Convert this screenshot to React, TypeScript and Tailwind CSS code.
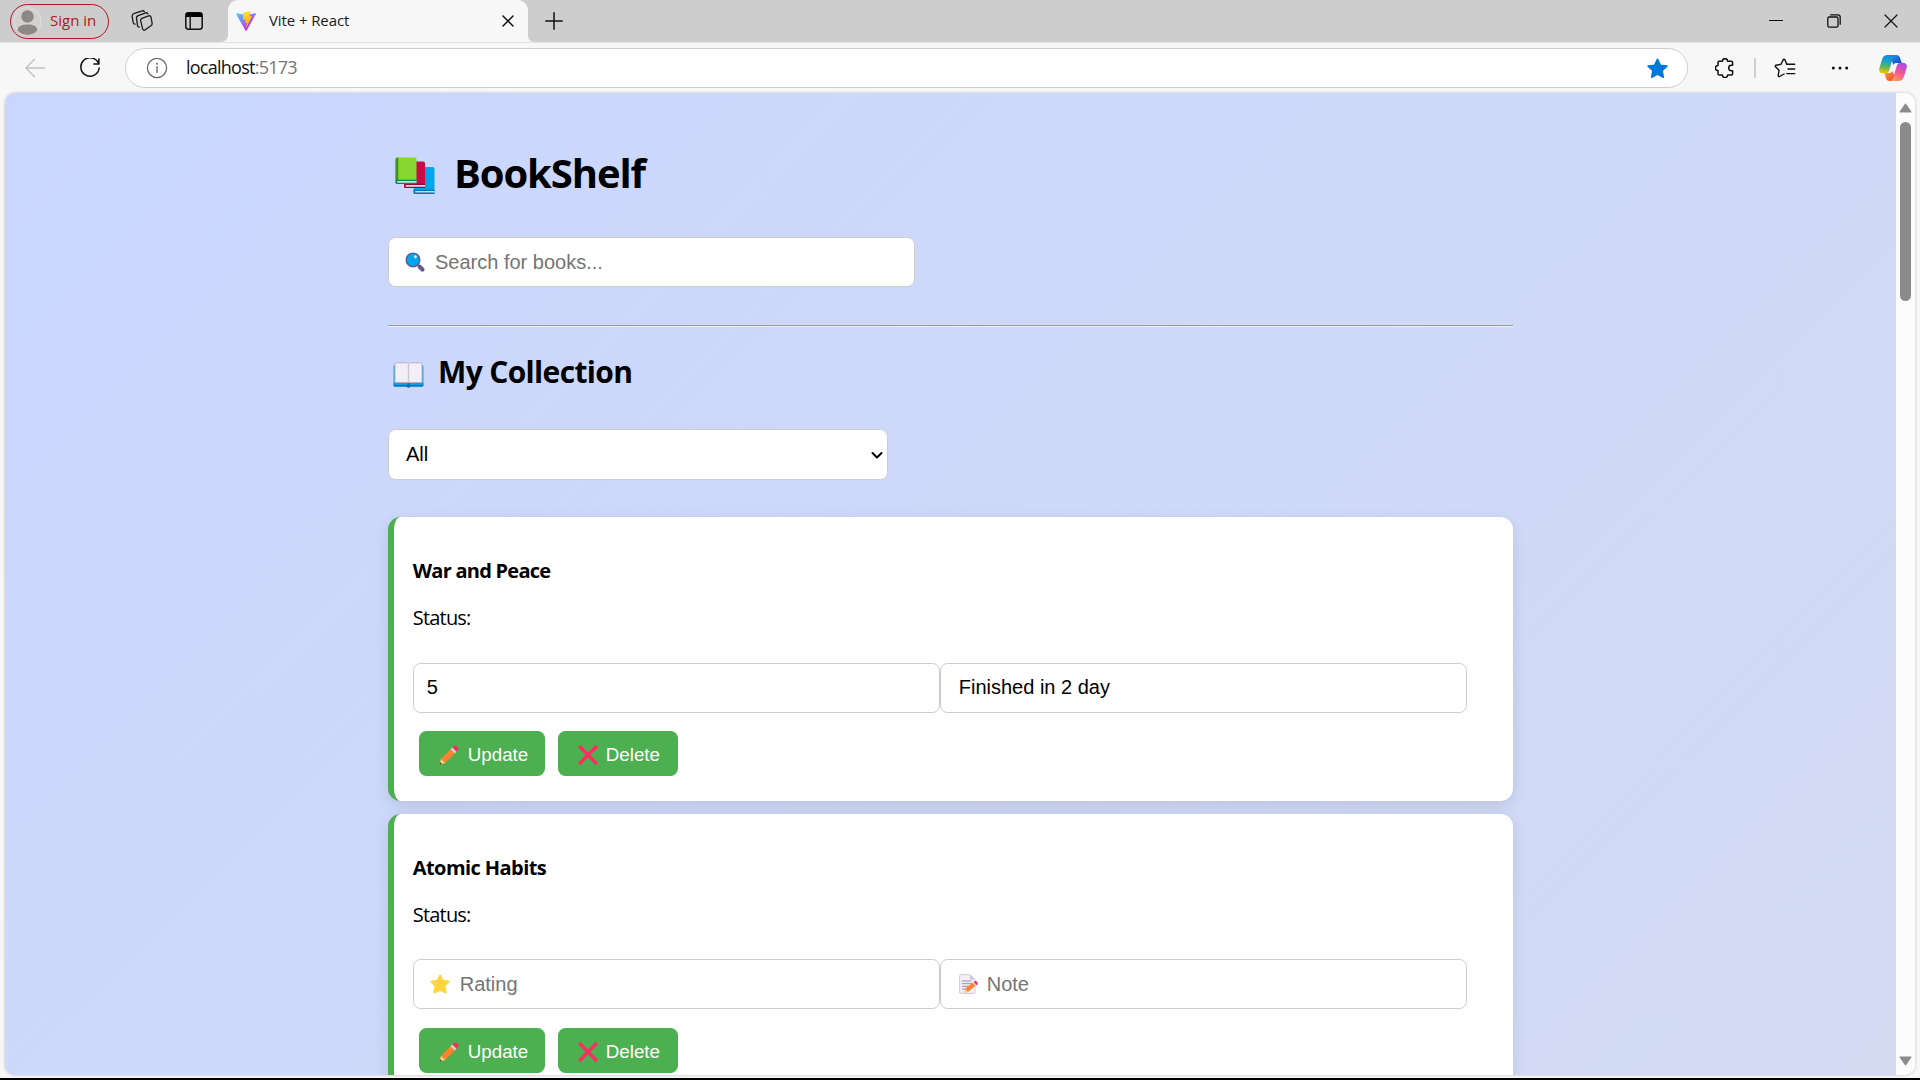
import React from "react";

type IconProps = { className?: string };

const UI = "font-['Segoe_UI','Open_Sans',sans-serif]";
const ARIAL = "font-['Liberation_Sans',Arial,sans-serif]";

function Avatar() {
  return (
    <svg className="block size-[30px] shrink-0" viewBox="0 0 30 30">
      <circle cx="16.500" cy="15" r="13.6" fill="#d3d0cd" stroke="#e3e0dd" strokeWidth="1" />
      <circle cx="16.500" cy="10.5" r="6.2" fill="#8b8886" />
      <path d="M6.500 24.5C6.800 20.6 10.500 18.6 16.500 18.6s9.7 2 10 5.9a13.6 13.6 0 0 1-20 0Z" fill="#8b8886" />
    </svg>
  );
}

function CollectionsIcon({ className }: IconProps) {
  return (
    <svg className={className} viewBox="0 0 22 22" fill="none" stroke="#1b1b1b" strokeWidth="1.3" strokeLinejoin="round" strokeLinecap="round">
      <path d="M11 8.400 17.500 5.900a1.800 1.800 0 0 1 2.500 1.200l1.100 6.100a2.600 2.600 0 0 1-1.200 2.600l-5.600 4a1.700 1.700 0 0 1-2.700-1L9.700 10.900A2.200 2.200 0 0 1 11 8.400Z" />
      <path d="M16.800 3.800a1.700 1.700 0 0 0-2.200-.9L7.300 5.600A2.800 2.800 0 0 0 5.500 8.700l1.100 7.100c.2.900.8 1.400 1.800 1.300" />
      <path d="M13.300 1.600a1.700 1.700 0 0 0-2.100-.7L3.300 3.400A3.200 3.200 0 0 0 1.200 6.900l1 5.700c.2 1 .8 1.600 1.900 1.500" />
    </svg>
  );
}

function TabActionsIcon({ className }: IconProps) {
  return (
    <svg className={className} viewBox="0 0 18 18" fill="none">
      <rect x="0.8" y="0.8" width="16.4" height="16.4" rx="2.6" stroke="#111" strokeWidth="1.5" />
      <path d="M.8 5V3.200A2.500 2.500 0 0 1 3.300.8h11.400a2.500 2.500 0 0 1 2.500 2.400V5Z" fill="#000" />
      <path d="M5.200 5v12" stroke="#111" strokeWidth="1.400" />
    </svg>
  );
}

function ViteIcon({ className }: IconProps) {
  return (
    <svg className={className} viewBox="0 0 256 257">
      <defs>
        <linearGradient id="viteA" x1="-.828%" x2="57.636%" y1="7.652%" y2="78.411%">
          <stop offset="0%" stopColor="#41D1FF" />
          <stop offset="100%" stopColor="#BD34FE" />
        </linearGradient>
        <linearGradient id="viteB" x1="43.376%" x2="50.316%" y1="2.242%" y2="89.03%">
          <stop offset="0%" stopColor="#FFEA83" />
          <stop offset="8.333%" stopColor="#FFDD35" />
          <stop offset="100%" stopColor="#FFA800" />
        </linearGradient>
      </defs>
      <path fill="url(#viteA)" d="M255.153 37.938L134.897 252.976c-2.483 4.44-8.862 4.466-11.382.048L.875 37.958c-2.746-4.814 1.371-10.646 6.827-9.67l120.385 21.517a6.537 6.537 0 0 0 2.322-.004l117.867-21.483c5.438-.991 9.574 4.796 6.877 9.62Z" />
      <path fill="url(#viteB)" d="M185.432.063L96.44 17.501a3.268 3.268 0 0 0-2.634 3.014l-5.474 92.456a3.268 3.268 0 0 0 3.997 3.378l24.777-5.718c2.318-.535 4.413 1.507 3.936 3.838l-7.361 36.047c-.495 2.426 1.782 4.5 4.151 3.78l15.304-4.649c2.372-.72 4.652 1.36 4.15 3.788l-11.698 56.621c-.732 3.542 3.979 5.473 5.943 2.437l1.313-2.028l72.516-144.720c1.215-2.423-.88-5.186-3.540-4.672l-25.505 4.922c-2.396.462-4.435-1.770-3.759-4.114l16.646-57.705c.677-2.350-1.370-4.583-3.769-4.113Z" />
    </svg>
  );
}

function Stroke({ className, d, w = 1.4, color = "#111", box = "0 0 20 20" }: { className?: string; d: string; w?: number; color?: string; box?: string }) {
  return (
    <svg className={className} viewBox={box} fill="none" stroke={color} strokeWidth={w} strokeLinecap="round" strokeLinejoin="round">
      <path d={d} />
    </svg>
  );
}

function InfoIcon({ className }: IconProps) {
  return (
    <svg className={className} viewBox="0 0 22 22" fill="none">
      <circle cx="11" cy="11" r="9.600" stroke="#6b6b6b" strokeWidth="1.300" />
      <path d="M11 9.800v5.700" stroke="#6b6b6b" strokeWidth="1.400" strokeLinecap="round" />
      <circle cx="11" cy="6.800" r="1" fill="#6b6b6b" />
    </svg>
  );
}

function StarFilled({ className }: IconProps) {
  return (
    <svg className={className} viewBox="0 0 20 20">
      <path
        d="M10 1.200 12.700 6.900 18.900 7.700 14.300 12 15.500 18.300 10 15.300 4.500 18.300 5.700 12 1.100 7.700 7.300 6.900Z"
        fill="#0078d7"
        stroke="#0078d7"
        strokeWidth="1.600"
        strokeLinejoin="round"
      />
    </svg>
  );
}

function FavoritesIcon({ className }: IconProps) {
  return (
    <svg className={className} viewBox="0 0 22 20" fill="none" stroke="#111" strokeWidth="1.400" strokeLinecap="round" strokeLinejoin="round">
      <path d="M13.700 6.400 12.800 6.300 10.900 1.900a.9.900 0 0 0-1.700 0L7 6.300l-5 .9a.9.900 0 0 0-.5 1.500L5 12.300l-.8 5.300a.9.900 0 0 0 1.300.9l4.600-2.500" />
      <path d="M12.800 6.300h7.900M14 11h6.700M12.800 15.600h7.900" />
    </svg>
  );
}

function CopilotIcon({ className }: IconProps) {
  return (
    <svg className={className} viewBox="0 0 28 26">
      <defs>
        <linearGradient id="cpL" x1="0.500" y1="0" x2="0.350" y2="1">
          <stop offset="0" stopColor="#0a8fe8" />
          <stop offset="0.350" stopColor="#1c9fc8" />
          <stop offset="0.650" stopColor="#5bb85a" />
          <stop offset="1" stopColor="#f6c400" />
        </linearGradient>
        <linearGradient id="cpR" x1="0.700" y1="0" x2="0.300" y2="1">
          <stop offset="0" stopColor="#a64af0" />
          <stop offset="0.500" stopColor="#f0569a" />
          <stop offset="1" stopColor="#ff9a5a" />
        </linearGradient>
        <linearGradient id="cpT" x1="0" y1="0" x2="1" y2="1">
          <stop offset="0" stopColor="#2aa6f0" />
          <stop offset="1" stopColor="#1238c8" />
        </linearGradient>
        <linearGradient id="cpB" x1="0" y1="0" x2="1" y2="1">
          <stop offset="0" stopColor="#ffa51e" />
          <stop offset="1" stopColor="#e8344e" />
        </linearGradient>
      </defs>
      <path d="M9 0h8.500c2 0 3 1.200 3.600 3l1.500 5h-4.600c-2 0-3 .6-3.600 2L12 4Z" fill="url(#cpT)" />
      <path d="M19 26h-8.500c-2 0-3-1.200-3.600-3l-1.500-5h4.500c2 0 2.800-.4 3.300-2l3.200 6Z" fill="url(#cpB)" />
      <path d="M8.500 0h8.300c-1.800.6-2.600 2-3.200 4l-3.300 11c-.6 2-1.800 3.300-4 3.300H4.200C1 18.300-.5 16 .4 13L3.200 4C4 1.500 5.800 0 8.500 0Z" fill="url(#cpL)" />
      <path d="M19.500 26h-8.300c1.800-.6 2.600-2 3.200-4l3.300-11c.6-2 1.800-3.300 4-3.300h2.100c3.200 0 4.700 2.300 3.800 5.300L24.800 22c-.8 2.500-2.600 4-5.300 4Z" fill="url(#cpR)" />
    </svg>
  );
}

function BooksEmoji({ className }: IconProps) {
  return (
    <svg className={className} viewBox="0 0 40 38">
      <path d="M18.500 12a2 2 0 0 1 2-2H37.500a2 2 0 0 1 2 2V35.500H18.500Z" fill="#00a6ed" />
      <path d="M18.500 34.500c0-1 .6-1.800 1.600-1.800H39.500V37H20a1.500 1.500 0 0 1-1.500-1.500Z" fill="#0074ba" />
      <path d="M20.200 33.900H39.500v1.700H20.200Z" fill="#d9d2e0" />
      <path d="M9 6.500a2 2 0 0 1 2-2H28a2 2 0 0 1 2 2V30H9Z" fill="#ca0b4a" />
      <path d="M9 28.500c0-1 .6-1.700 1.600-1.700H30V31H10.500A1.500 1.500 0 0 1 9 29.500Z" fill="#990838" />
      <path d="M10.700 28H30v1.800H10.700Z" fill="#e6dce6" />
      <path d="M.5 2.500a2 2 0 0 1 2-2H19.500a2 2 0 0 1 2 2V25.500H.5Z" fill="#86d72f" />
      <path d="M.5 2.500a2 2 0 0 1 2-2h.8V24H.5Z" fill="#44911b" />
      <path d="M.5 24.500c0-1 .6-1.700 1.600-1.700H21.500V27H2a1.500 1.500 0 0 1-1.500-1.500Z" fill="#008463" />
      <path d="M2.200 24H21.500v1.800H2.200Z" fill="#d3dde0" />
    </svg>
  );
}

function OpenBookEmoji({ className }: IconProps) {
  return (
    <svg className={className} viewBox="0 0 31 26">
      <path d="M2 3h27a1.500 1.500 0 0 1 1.500 1.500V22.500A1.700 1.700 0 0 1 29 24H2A1.700 1.700 0 0 1 .5 22.500V4.500A1.500 1.500 0 0 1 2 3Z" fill="#26a9e0" />
      <path d="M.5 22.500H30.500v.8c0 .8-.6 1.500-1.500 1.500H17.500a2.500 2.500 0 0 1-4 0H2a1.500 1.500 0 0 1-1.500-1.500Z" fill="#0074ba" />
      <path d="M.5 20.500H30.500v2.300H.5Z" fill="#00a6ed" />
      <path d="M3.500.8H13.800a2 2 0 0 1 1.700.8 2 2 0 0 1 1.700-.8H27.500A1.500 1.500 0 0 1 29 2.300V20.500H2V2.300A1.500 1.500 0 0 1 3.500.8Z" fill="#f3eef8" stroke="#b4acbc" strokeWidth=".9" />
      <path d="M15.500 1.600V21" stroke="#cdc4d6" strokeWidth="1.300" />
      <path d="M14 21h3v2.500a1.500 1.500 0 0 1-3 0Z" fill="#0074ba" />
    </svg>
  );
}

function SearchEmoji({ className }: IconProps) {
  return (
    <svg className={className} viewBox="0 0 20 20">
      <path d="m12 12 2.800 2.800" stroke="#533566" strokeWidth="1.600" />
      <path d="m14.700 14.700 2.700 2.700" stroke="#635994" strokeWidth="4.200" strokeLinecap="round" />
      <circle cx="8" cy="7.900" r="6.800" fill="#00a6ed" stroke="#635994" strokeWidth="1.400" />
      <ellipse cx="10.400" cy="4.800" rx="1.200" ry="1.600" transform="rotate(-35 10.400 4.800)" fill="#fff" />
    </svg>
  );
}

function PencilEmoji({ className }: IconProps) {
  return (
    <svg className={className} viewBox="0 0 20 20">
      <path d="M.5 19.500 2 13.700 6.300 18Z" fill="#ffce7c" />
      <path d="M.5 19.500 1.100 17.200 2.800 18.900Z" fill="#402a32" />
      <path d="M2 13.700 11.500 4.200 15.800 8.500 6.300 18Z" fill="#ff822d" />
      <path d="M11.500 4.200 13.500 2.200 17.800 6.500 15.800 8.500Z" fill="#d3d3d3" />
      <path d="m13.300 2.400 1.200-1.200c.9-.9 2.400-.9 3.300 0l1 1c.9.900.9 2.400 0 3.300l-1.200 1.200Z" fill="#f92f60" />
    </svg>
  );
}

function CrossEmoji({ className }: IconProps) {
  return (
    <svg className={className} viewBox="0 0 20 20">
      <path d="M2.100 2.100 17.900 17.900M17.900 2.100 2.100 17.900" stroke="#f92f60" strokeWidth="3.500" strokeLinecap="round" />
    </svg>
  );
}

function StarEmoji({ className }: IconProps) {
  return (
    <svg className={className} viewBox="0 0 20 20">
      <path
        d="M10 2 12.300 7.100 18.200 7.700 14 11.900 15.400 18 10 15.600 4.600 18 6 11.900 1.800 7.700 7.700 7.100Z"
        fill="#fcd53f"
        stroke="#fcd53f"
        strokeWidth="2.600"
        strokeLinejoin="round"
      />
    </svg>
  );
}

function MemoEmoji({ className }: IconProps) {
  return (
    <svg className={className} viewBox="0 0 20 20">
      <path d="M1.800.6H11l5 5V18.200a1.200 1.200 0 0 1-1.200 1.200h-13A1.200 1.200 0 0 1 .6 18.200V1.800A1.200 1.200 0 0 1 1.800.6Z" fill="#f3eef8" stroke="#cdc4d6" strokeWidth=".9" />
      <path d="M11 .6V4.400A1.200 1.200 0 0 0 12.200 5.600H16Z" fill="#cdc4d6" />
      <path d="M3 7h9.500M3 9.700h10.500M3 12.400h8M3 15.100h4" stroke="#998ea4" strokeWidth="1" />
      <path d="M4.800 19.200 6 15 9 18Z" fill="#ffce7c" />
      <path d="M6 15 13.500 8.800 16.300 11.800 9 18Z" fill="#ff822d" />
      <path d="m13.500 8.800 1.200-1 2.800 3-1.200 1Z" fill="#d3d3d3" />
      <path d="m14.700 7.800.8-.5c1.600-.9 4.200 1.600 3 3.100l-1 .9Z" fill="#f92f60" />
    </svg>
  );
}

function TabStrip() {
  return (
    <header className="flex h-[42px] items-center bg-[#cdcdcd]">
      <div className="ml-[10px] flex h-[35px] w-[99px] items-center rounded-full border-[1.5px] border-[#b3161c]">
        <Avatar />
        <span className={`${UI} ml-[9px] pb-[2px] text-[15px] leading-5 whitespace-nowrap text-[#b3161c]`}>Sign in</span>
      </div>
      <CollectionsIcon className="ml-[22px] size-[22px]" />
      <TabActionsIcon className="ml-[32px] size-[18px]" />
      <div className="ml-[18px] flex h-full w-[7px] items-end bg-[#f7f7f7]">
        <div className="h-full w-full rounded-br-[8px] bg-[#cdcdcd]" />
      </div>
      <div className="flex h-full w-[300px] bg-[#cdcdcd]">
        <div className="flex h-full w-[300px] items-center rounded-t-[10px] bg-[#f7f7f7] pl-[8px]">
          <ViteIcon className="size-[20px]" />
          <span className={`${UI} ml-[13px] w-[233px] pb-[2px] text-[15px] leading-5 tracking-[-0.1px] whitespace-nowrap text-[#1b1b1b]`}>Vite + React</span>
          <Stroke className="size-[12px]" d="M1 1 11 11M11 1 1 11" box="0 0 12 12" w={1.5} />
        </div>
      </div>
      <div className="flex h-full w-[6px] items-end bg-[#f7f7f7]">
        <div className="h-full w-full rounded-bl-[8px] bg-[#cdcdcd]" />
      </div>
      <Stroke className="ml-[11px] size-[18px]" d="M9 .8V17.200M.8 9H17.200" box="0 0 18 18" w={1.5} />
      <div className="ml-auto flex items-center pr-[22px]">
        <Stroke className="size-[14px]" d="M.5 6.500H13.500" box="0 0 14 14" w={1.2} />
        <svg className="ml-[44px] size-[14px]" viewBox="0 0 14 14" fill="none" stroke="#111" strokeWidth="1.300">
          <rect x=".8" y="3" width="10.200" height="10.200" rx="1.400" />
          <path d="M3.200.9h7.600a2.400 2.400 0 0 1 2.400 2.400v7.500" />
        </svg>
        <Stroke className="ml-[43px] size-[14px]" d="M1 1 13 13M13 1 1 13" box="0 0 14 14" w={1.2} />
      </div>
    </header>
  );
}

function AddressBar() {
  return (
    <div className="flex h-[51px] items-center border-t border-[#e2e2e2] bg-[#f7f7f7]">
      <Stroke className="ml-[25px] size-[20px]" d="M19.500 10H1M9.500 1.200.8 10l8.700 8.800" color="#c2c2c2" />
      <Stroke className="ml-[35px] size-[20px]" d="M18.700 5.800A9.200 9.200 0 1 0 19.200 10M18.900 1v5h-5" w={1.5} />
      <div className="ml-[25px] flex h-[40px] w-[1563px] items-center rounded-full border border-[#cfcfcf] bg-white">
        <InfoIcon className="ml-[20px] size-[22px]" />
        <span className={`${UI} ml-[18px] pb-[2px] text-[18px] leading-6 tracking-[-0.75px] whitespace-nowrap text-[#111]`}>
          localhost<span className="text-[#767676]">:5173</span>
        </span>
        <StarFilled className="mr-[19px] ml-auto size-[21px]" />
      </div>
      <svg className="ml-[27px] size-[20px]" viewBox="0 0 20 20" fill="none" stroke="#111" strokeWidth="1.500" strokeLinejoin="round">
        <path d="M4.200 3.300H7.400a2.600 2.600 0 0 1 5.200 0h3.800a1.200 1.200 0 0 1 1.200 1.200V7.300h-1.200a2.700 2.700 0 0 0 0 5.400h1.200v3a1.200 1.200 0 0 1-1.200 1.200H12.600a2.600 2.600 0 0 1-5.200 0H4.200A1.200 1.200 0 0 1 3 15.700V12.600a2.600 2.600 0 0 1 0-5.200V4.500a1.200 1.200 0 0 1 1.200-1.200Z" />
      </svg>
      <div className="ml-[19px] h-[20px] w-[2px] bg-[#cfcfcf]" />
      <FavoritesIcon className="ml-[18px] h-[20px] w-[22px]" />
      <svg className="ml-[35px] h-[4px] w-[18px]" viewBox="0 0 18 4">
        <circle cx="2.300" cy="2" r="1.500" fill="#111" />
        <circle cx="9" cy="2" r="1.500" fill="#111" />
        <circle cx="15.700" cy="2" r="1.500" fill="#111" />
      </svg>
      <CopilotIcon className="ml-[30px] h-[26px] w-[28px]" />
    </div>
  );
}

function Field({ icon, text, value, inset = "pl-[18px]" }: { icon?: React.ReactNode; text: string; value?: boolean; inset?: string }) {
  return (
    <div className={`flex h-[50px] w-[527px] shrink-0 items-center rounded-[7.5px] border border-[#ccc] bg-white ${inset}`}>
      {icon}
      <span className={`${ARIAL} text-[20px] leading-6 whitespace-nowrap ${value ? "pb-[2px] text-black" : "text-[#757575]"}`}>{text}</span>
    </div>
  );
}

function ActionButton({ icon, label, width }: { icon: React.ReactNode; label: string; width: string }) {
  return (
    <button className={`${ARIAL} ${width} flex h-[45px] items-center rounded-[7.5px] bg-[#4caf50] pt-[2px] pl-[20px] text-[18.75px] leading-6 font-medium text-white`}>
      {icon}
      {label}
    </button>
  );
}

type Book = { title: string; rating?: string; note?: string };

const books: Book[] = [{ title: "War and Peace", rating: "5", note: "Finished in 2 day" }, { title: "Atomic Habits" }];

function BookCard({ book }: { book: Book }) {
  const rated = Boolean(book.rating);
  return (
    <article className="mb-[13px] h-[284px] rounded-[12.5px] border-l-[6.25px] border-[#4caf50] bg-white pl-[18.75px] shadow-[0_5px_15px_rgba(0,0,0,0.1)]">
      <h4 className={`${UI} pt-[40px] text-[20px] leading-7 font-bold text-black ${rated ? "tracking-[-0.75px]" : "tracking-[-0.57px]"}`}>{book.title}</h4>
      <p className={`${UI} mt-[19px] text-[20px] leading-7 tracking-[-0.8px] text-black`}>Status:</p>
      <div className={`flex ${rated ? "mt-[31px]" : "mt-[30px]"}`}>
        {book.rating ? (
          <Field text={book.rating} value inset="pl-[13px]" />
        ) : (
          <Field icon={<StarEmoji className="mr-[10px] size-[20px]" />} text="Rating" inset="pl-[16px]" />
        )}
        {book.note ? <Field text={book.note} value inset="pl-[18px]" /> : <Field icon={<MemoEmoji className="mr-[8px] size-[20px]" />} text="Note" inset="pl-[18px]" />}
      </div>
      <div className={`flex gap-[13px] pl-[6px] ${rated ? "mt-[18px]" : "mt-[19px]"}`}>
        <ActionButton width="w-[126px]" label="Update" icon={<PencilEmoji className="mr-[9px] size-[20px]" />} />
        <ActionButton width="w-[120px]" label="Delete" icon={<CrossEmoji className="mr-[8px] size-[20px]" />} />
      </div>
    </article>
  );
}

function Scrollbar() {
  return (
    <div className="flex w-[19px] flex-col items-center bg-[#fcfcfc] pt-[10px] pb-[9px]">
      <svg className="h-[10px] w-[13px]" viewBox="0 0 13 10">
        <path d="M6.500 1.200 12 9H1Z" fill="#8b8b8b" stroke="#8b8b8b" strokeWidth="1.200" strokeLinejoin="round" />
      </svg>
      <div className="mt-[9px] h-[179px] w-[11px] rounded-full bg-[#8b8b8b]" />
      <svg className="mt-auto h-[10px] w-[13px]" viewBox="0 0 13 10">
        <path d="M6.500 8.800 12 1H1Z" fill="#8b8b8b" stroke="#8b8b8b" strokeWidth="1.200" strokeLinejoin="round" />
      </svg>
    </div>
  );
}

export default function App() {
  return (
    <div className="flex h-[1080px] w-[1920px] flex-col overflow-hidden border-b-2 border-black bg-[#f7f7f7]">
      <TabStrip />
      <AddressBar />
      <div className="mr-[5px] ml-[5px] flex h-[982px] overflow-hidden rounded-[10px] shadow-[0_0_3px_rgba(0,0,0,0.25)]">
        <div className="h-[5100px] w-[1891px] bg-[linear-gradient(135deg,#c9d6ff,#e2e2e2)] pl-[383px]">
          <main className="w-[1125px]">
            <h1 className={`${UI} mt-[53px] flex h-[54px] items-center pl-[7px] text-[40px] leading-[54px] font-bold tracking-[-1.1px] text-black`}>
              <BooksEmoji className="mt-[6px] mr-[19px] h-[38px] w-[40px]" />
              BookShelf
            </h1>
            <div className="mt-[37px]">
              <Field icon={<SearchEmoji className="mr-[10px] size-[20px]" />} text="Search for books..." inset="pl-[16px]" />
            </div>
            <hr className="mt-[38px] h-[2px] border-t border-b border-t-[#9a9a9a] border-b-[#eeeeee]" />
            <h2 className={`${UI} mt-[24px] flex h-[41px] items-center pl-[5px] text-[30px] leading-[41px] font-bold tracking-[-0.65px] text-black`}>
              <OpenBookEmoji className="mt-[6px] mr-[14px] h-[26px] w-[31px]" />
              My Collection
            </h2>
            <div className="mt-[37px] flex h-[51px] w-[500px] items-center justify-between rounded-[7.5px] border border-[#ccc] bg-white pr-[4px] pl-[17px]">
              <span className={`${ARIAL} pb-[2px] text-[20px] leading-6 text-black`}>All</span>
              <Stroke className="h-[8px] w-[12px]" d="M1.500 2 6 6.500 10.500 2" box="0 0 12 8" w={2} color="#000" />
            </div>
            <section className="mt-[37px]">
              {books.map((book) => (
                <BookCard key={book.title} book={book} />
              ))}
            </section>
          </main>
        </div>
        <Scrollbar />
      </div>
    </div>
  );
}
